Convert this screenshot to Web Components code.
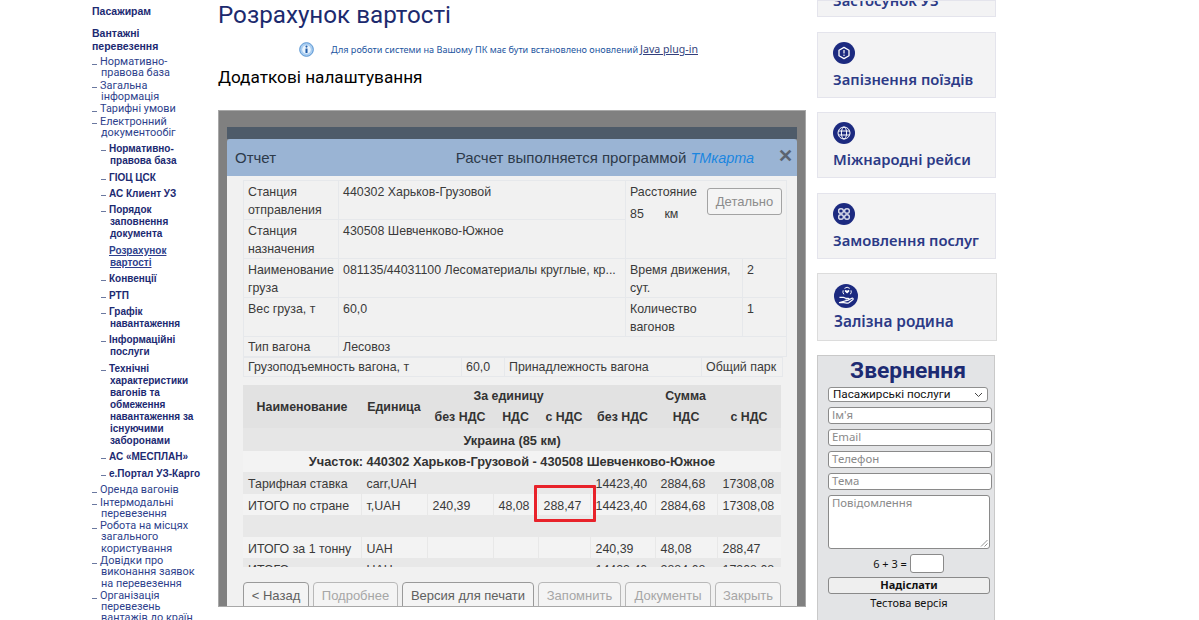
<!DOCTYPE html>
<html lang="uk"><head><meta charset="utf-8"><title>Розрахунок вартості</title>
<style>
html,body{margin:0;padding:0;background:#fff;height:620px;overflow:hidden}
</style></head><body>
<uz-page>
  <uz-sidenav slot="nav">
    <uz-navhead>Пасажирам</uz-navhead>
    <uz-navhead>Вантажні перевезення</uz-navhead>
    <uz-navlink>Нормативно-правова база</uz-navlink>
    <uz-navlink>Загальна інформація</uz-navlink>
    <uz-navlink>Тарифні умови</uz-navlink>
    <uz-navlink>Електронний документообіг</uz-navlink>
    <uz-navlink sub first>Нормативно-правова база</uz-navlink>
    <uz-navlink sub>ГІОЦ ЦСК</uz-navlink>
    <uz-navlink sub>АС Клиент УЗ</uz-navlink>
    <uz-navlink sub>Порядок заповнення документа</uz-navlink>
    <uz-navlink sub current>Розрахунок вартості</uz-navlink>
    <uz-navlink sub>Конвенції</uz-navlink>
    <uz-navlink sub>РТП</uz-navlink>
    <uz-navlink sub>Графік навантаження</uz-navlink>
    <uz-navlink sub>Інформаційні послуги</uz-navlink>
    <uz-navlink sub>Технічні характеристики вагонів та обмеження навантаження за існуючими заборонами</uz-navlink>
    <uz-navlink sub>АС «МЕСПЛАН»</uz-navlink>
    <uz-navlink sub nowrap>е.Портал УЗ-Карго</uz-navlink>
    <uz-navlink after>Оренда вагонів</uz-navlink>
    <uz-navlink>Інтермодальні перевезення</uz-navlink>
    <uz-navlink>Робота на місцях загального користування</uz-navlink>
    <uz-navlink>Довідки про виконання заявок на перевезення</uz-navlink>
    <uz-navlink>Організація перевезень вантажів до країн</uz-navlink>
  </uz-sidenav>
  <uz-main slot="main"><uz-report></uz-report></uz-main>
  <uz-aside slot="aside">
    <uz-tile clipped label="Застосунок УЗ"></uz-tile>
    <uz-tile label="Запізнення поїздів" icon="alert"></uz-tile>
    <uz-tile label="Міжнародні рейси" icon="globe"></uz-tile>
    <uz-tile label="Замовлення послуг" icon="grid"></uz-tile>
    <uz-tile label="Залізна родина" icon="hand" framed></uz-tile>
    <uz-appeal></uz-appeal>
  </uz-aside>
</uz-page>
<script>
const def=(name,css,html)=>{
  customElements.define(name,class extends HTMLElement{
    connectedCallback(){
      if(this.shadowRoot)return;
      const r=this.attachShadow({mode:'open'});
      r.innerHTML=`<style>${css}</style>`+(typeof html==='function'?html(this):html);
    }
  });
};
def('uz-page',`
:host{display:flex;height:620px;overflow:hidden;padding-left:92px;box-sizing:border-box;font-family:"Noto Sans",sans-serif}
.n{width:126px;flex:none}.m{width:588px;flex:none}.a{width:180px;flex:none;margin-left:11px}
`,`<div class="n"><slot name="nav"></slot></div><div class="m"><slot name="main"></slot></div><div class="a"><slot name="aside"></slot></div>`);

def('uz-sidenav',`:host{display:block;width:110px;padding-top:5px;color:#1f2f7a}`,`<slot></slot>`);
def('uz-navhead',`
:host{display:block;font:bold 10.5px/13px "Liberation Sans",sans-serif;color:#1c2a72;margin-bottom:9px;width:75px}
:host(:nth-child(2)){margin-bottom:3px}
`,`<slot></slot>`);
def('uz-navlink',`
:host{display:flex;font:10.9px/11.2px Roboto,sans-serif;color:#2e3f8c;margin-bottom:1.3px}
.a{flex:none;width:8px;position:relative}
.a::after{content:"";position:absolute;left:0;top:7.5px;width:5px;height:1px;background:#6a78a0}
.t{padding-left:1px;text-indent:-1px;flex:1}
:host([after]){margin-top:4px}
:host([sub]){font:bold 10px/12px "Liberation Sans",sans-serif;color:#1c2a72;padding-left:9px;margin-bottom:4.4px;margin-top:0}
:host([first]){margin-top:5px}
:host([sub]) .a::after{top:7px}
:host([current]) .a{visibility:hidden}
:host([current]) .t{text-decoration:underline;color:#2e3f8c}
:host([nowrap]) .t{white-space:nowrap}
`,`<span class="a"></span><span class="t"><slot></slot></span>`);

def('uz-main',`
:host{display:block;color:#000}
h1{margin:0;font:400 24.2px/30px Roboto,sans-serif;color:#1c2a6e;height:36px}
.note{display:flex;align-items:center;height:22px;padding:2px 0 0 81px;font-size:9.1px;color:#1c55a0;white-space:nowrap;box-sizing:border-box;margin-top:1px}
.note svg{width:15px;height:15px;margin-right:17px;flex:none}
.note a{color:#333f7c;font-size:10.6px;text-decoration:underline;margin-left:2px}
h2{margin:0;font:400 17.2px/22px Roboto,sans-serif;padding-top:7px;height:44px}
`,`<h1>Розрахунок вартості</h1>
<div class="note"><svg viewBox="0 0 16 16"><circle cx="8" cy="8" r="7.3" fill="#a9cdf0" stroke="#4f8fd0" stroke-width="1"/><circle cx="8" cy="8" r="4.6" fill="#eaf4fd"/><circle cx="8" cy="4.9" r="1.1" fill="#1f5ba8"/><rect x="6.9" y="6.8" width="2.2" height="5" rx=".4" fill="#1f5ba8"/></svg>Для роботи системи на Вашому ПК має бути встановлено оновлений <a>Java plug-in</a></div>
<h2>Додаткові налаштування</h2>
<slot></slot>`);

def('uz-report',`
:host{display:block;height:497px;box-sizing:border-box;background:#808080;border:1px solid #a8a8a8;padding:16px 8px 0;overflow:hidden;font:12.4px/18px "Liberation Sans",sans-serif;color:#3a3a3a}
.strip{height:12px;background:#4e5b69}
.hd{height:37px;background:#9ab4d4;display:flex;align-items:center;padding:0 4px 0 8px;font-size:15px;color:#2d3a4a;border-radius:3px 3px 0 0}
.hd .r{margin-left:auto;margin-right:24px}.hd i{color:#1a86e0;font-weight:normal;font-size:14.4px}
.hd b{font-size:18px;color:#5a6470;line-height:1;margin-bottom:4px}
.body{background:#f1f1f1;height:431px;padding:4px 0 0 16px;box-sizing:border-box}
table{border-collapse:collapse;table-layout:fixed;background:#f1f1f1}
td,th{padding:0 5px;vertical-align:top;border:1px solid #e6e8eb;overflow:hidden;white-space:nowrap}
.info{width:543px}
.info td{padding:2px 4px 0;height:36px;overflow:visible}
.info tr.s td{height:18px;padding-top:1px}
.dist{position:relative}
.d2{display:block;margin-top:4px}
.btn{position:absolute;right:4px;top:7px;width:75px;height:27px;box-sizing:border-box;border:1px solid #a3a3a3;border-radius:3px;color:#8c8c8c;display:flex;align-items:center;justify-content:center;font-size:13px;background:#f4f4f4}
.sub{width:539px;margin-top:0}
.sub td{height:18px;padding:0 4px}
.wrap{width:538px;height:182px;overflow:hidden;margin-top:8px;position:relative}
.cost{width:538px}
.cost th,.cost td{height:21px;padding:0 5px;vertical-align:middle;line-height:18px;border:0}
.cost th{background:#e2e2e2;font-weight:bold;text-align:center;color:#333}
.cost td{border:1px solid transparent;border-width:0 1px 0 0;border-right-color:#e8e8e8;padding-top:2px;height:19px}
.g td{background:#e8e8e8}.w td{background:#f3f3f3}
.g th{background:#e6e6e6;font-size:12.8px;padding-top:2px}.cost tr.w th{background:#f3f3f3;font-size:12.8px}
.mark{position:absolute;left:291px;top:100px;width:62px;height:37px;box-sizing:border-box;border:3px solid #e8222a;border-radius:1px}
.bar{display:flex;gap:4px;margin-top:15px}
.bar span{height:30px;box-sizing:border-box;border:1px solid #b8b8b8;border-radius:4px;font-size:13px;color:#a6a6a6;display:flex;align-items:center;justify-content:center;background:#f4f4f4;padding-bottom:3px}
.bar span.on{color:#606060;border-color:#9a9a9a}
`,`<div class="strip"></div>
<div class="hd"><span>Отчет</span><span class="r">Расчет выполняется программой <i>ТМкарта</i></span><b>✕</b></div>
<div class="body">
<table class="info"><colgroup><col style="width:95px"><col style="width:287px"><col style="width:117px"><col style="width:44px"></colgroup>
<tr><td>Станция<br>отправления</td><td>440302 Харьков-Грузовой</td><td colspan="2" rowspan="2" class="dist">Расстояние<span class="d2">85 &nbsp; &nbsp; &nbsp;км</span><span class="btn">Детально</span></td></tr>
<tr><td>Станция<br>назначения</td><td>430508 Шевченково-Южное</td></tr>
<tr><td>Наименование<br>груза</td><td>081135/44031100 Лесоматериалы круглые, кр...</td><td>Время движения,<br>сут.</td><td>2</td></tr>
<tr><td>Вес груза, т</td><td>60,0</td><td>Количество<br>вагонов</td><td>1</td></tr>
<tr class="s"><td>Тип вагона</td><td colspan="3">Лесовоз</td></tr>
</table>
<table class="sub"><colgroup><col style="width:218px"><col style="width:43px"><col style="width:197px"><col style="width:81px"></colgroup>
<tr><td>Грузоподъемность вагона, т</td><td>60,0</td><td>Принадлежность вагона</td><td>Общий парк</td></tr></table>
<div class="wrap"><table class="cost"><colgroup><col style="width:118px"><col style="width:66px"><col style="width:66px"><col style="width:45px"><col style="width:52px"><col style="width:65px"><col style="width:62px"><col style="width:64px"></colgroup>
<tr><th rowspan="2">Наименование</th><th rowspan="2">Единица</th><th colspan="3">За единицу</th><th colspan="3">Сумма</th></tr>
<tr style="height:22px"><th>без НДС</th><th>НДС</th><th>с НДС</th><th>без НДС</th><th>НДС</th><th>с НДС</th></tr>
<tr class="g" style="height:23px"><th colspan="8">Украина (85 км)</th></tr>
<tr class="w"><th colspan="8">Участок: 440302 Харьков-Грузовой - 430508 Шевченково-Южное</th></tr>
<tr class="g" style="height:22px"><td>Тарифная ставка</td><td>carr,UAH</td><td></td><td></td><td></td><td>14423,40</td><td>2884,68</td><td>17308,08</td></tr>
<tr class="w"><td>ИТОГО по стране</td><td>т,UAH</td><td>240,39</td><td>48,08</td><td>288,47</td><td>14423,40</td><td>2884,68</td><td>17308,08</td></tr>
<tr class="g" style="height:22px"><td colspan="8"></td></tr>
<tr class="w"><td>ИТОГО за 1 тонну</td><td>UAH</td><td></td><td></td><td></td><td>240,39</td><td>48,08</td><td>288,47</td></tr>
<tr class="g"><td>ИТОГО</td><td>UAH</td><td></td><td></td><td></td><td>14423,40</td><td>2884,68</td><td>17308,08</td></tr>
</table><div class="mark"></div></div>
<div class="bar"><span class="on" style="width:66px">&lt; Назад</span><span style="width:85px">Подробнее</span><span class="on" style="width:132px">Версия для печати</span><span style="width:83px">Запомнить</span><span style="width:86px">Документы</span><span style="width:66px">Закрыть</span></div>
</div>`);

def('uz-aside',`:host{display:flex;flex-direction:column;gap:14.5px}`,`<slot></slot>`);
const icons={
 alert:`<path d="M11 5.4 16 8.2v5.6L11 16.6 6 13.8V8.2z" fill="none" stroke="#fff" stroke-width="1.3" stroke-linejoin="round"/><rect x="10.4" y="8" width="1.2" height="3.6" rx=".5" fill="#fff"/><circle cx="11" cy="13.2" r=".75" fill="#fff"/>`,
 globe:`<g fill="none" stroke="#fff" stroke-width="1"><circle cx="11" cy="11" r="6"/><ellipse cx="11" cy="11" rx="2.6" ry="6"/><path d="M5.4 9h11.2M5.4 13h11.2"/></g>`,
 grid:`<g fill="none" stroke="#fff" stroke-width="1.2"><rect x="5.8" y="5.8" width="4.4" height="4.4" rx="1.2"/><rect x="11.8" y="5.8" width="4.4" height="4.4" rx="1.2"/><rect x="5.8" y="11.8" width="4.4" height="4.4" rx="1.2"/><rect x="11.8" y="11.8" width="4.4" height="4.4" rx="1.2"/></g>`,
 hand:`<path d="M12 8.6 10.2 7c-.9-.9.3-2.1 1.1-1.3l.7.6.7-.6c.8-.8 2 .4 1.1 1.3z" fill="#fff"/><path d="M9 9.4a3.6 3.6 0 0 1-.6-3.6M15 9.4a3.6 3.6 0 0 0 .6-3.6M9.6 4a3.6 3.6 0 0 1 4.8 0" fill="none" stroke="#fff" stroke-width=".9"/><path d="M5 12.3h3.6c1.2 0 1.9.9 3 .9h1.4c1 0 1 1.6 0 1.6h-2.4m2.4 0 3.3-1.8c1-.5 1.8.8.9 1.5l-3.6 2.6c-.6.4-1.2.5-1.9.4L9 17H5z" fill="none" stroke="#fff" stroke-width="1.1" stroke-linejoin="round"/>`
};
def('uz-tile',`
:host{display:flex;flex-direction:column;justify-content:flex-end;height:66px;box-sizing:border-box;width:179px;background:#f3f3f4;border:1px solid #e4e4ec;padding:0 15px 7px;color:#2c3a86;overflow:hidden}
:host([clipped]){height:17px;padding-bottom:5px}
:host([framed]){height:68px;width:180px;border-color:#dcdcdc;background:#f1f1f2;padding-left:16px;padding-bottom:7px}
svg{display:block;width:22px;height:22px;margin-bottom:4px;flex:none}
:host([framed]) svg{width:24px;height:24px;margin-bottom:3px}
.l{font:600 14.8px/22px "Noto Sans",sans-serif;white-space:nowrap;flex:none}
:host([framed]) .l{font-size:15.4px}
`,h=>{const i=h.getAttribute('icon');return (i?`<svg viewBox="0 0 22 22"><circle cx="11" cy="11" r="11" fill="#1c2a80"/>${icons[i]}</svg>`:'')+`<span class="l">${h.getAttribute('label')}</span>`});

def('uz-appeal',`
:host{display:block;width:178px;height:280px;box-sizing:border-box;background:#e3e4e6;border:1px solid #c9c9c9;padding:0 0 0 10px;font-family:"Noto Sans",sans-serif;margin-top:-.5px;color:#111}
h3{margin:0;height:31px;font:bold 22.8px/30px Roboto,sans-serif;color:#1c2a72;text-align:center;padding-right:6px}
.sel{width:160px;height:15px;box-sizing:border-box;background:#fff;border:1px solid #8f8f8f;border-radius:3px;font:11.7px/13px Roboto,sans-serif;padding-left:4px;display:flex;align-items:center;justify-content:space-between;margin-bottom:5px}
.sel svg{width:9px;height:6px;margin-right:4px}
.in{width:164px;height:17px;box-sizing:border-box;background:#fff;border:1px solid #8a8a8a;border-radius:3px;font-size:11.4px;line-height:13px;color:#8a8a8a;padding-left:3px;margin-bottom:5px}
.ta{width:162px;height:54px;position:relative;margin-bottom:5px;line-height:13px}
.ta svg{position:absolute;right:1px;bottom:1px;width:8px;height:8px}
.cap{display:flex;align-items:center;justify-content:center;height:19px;gap:3px;font-size:11px;padding-right:5px;margin-top:0;margin-bottom:4px}
.cap span{width:34px;height:19px;box-sizing:border-box;background:#fff;border:1px solid #8a8a8a;border-radius:3px}
.btn{width:162px;height:17px;box-sizing:border-box;border:1px solid #8a8a8a;border-radius:3px;background:#efefef;font-weight:bold;font-size:11px;line-height:14px;text-align:center;color:#111}
.t{font-size:11px;text-align:center;width:162px;margin-top:1px;line-height:16px}
`,`<h3>Звернення</h3>
<div class="sel">Пасажирські послуги<svg viewBox="0 0 9 6"><path d="M1 1l3.5 3.5L8 1" fill="none" stroke="#444" stroke-width="1"/></svg></div>
<div class="in">Ім'я</div><div class="in">Email</div><div class="in">Телефон</div><div class="in">Тема</div>
<div class="in ta">Повідомлення<svg viewBox="0 0 8 8"><path d="M7.5 1 1 7.5M7.5 4.5 4.5 7.5" stroke="#777" stroke-width=".8"/></svg></div>
<div class="cap">6 + 3 =<span></span></div>
<div class="btn">Надіслати</div>
<div class="t">Тестова версія</div>`);
</script>
</body></html>
